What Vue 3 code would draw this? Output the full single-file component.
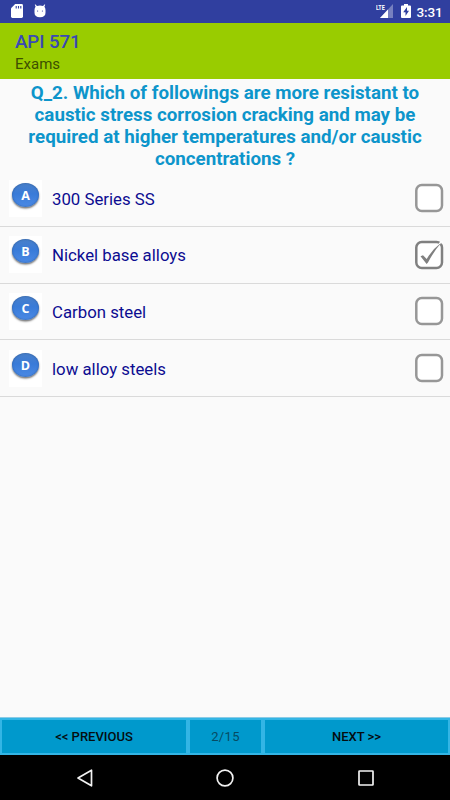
<script setup>
const question = [
  'Q_2. Which of followings are more resistant to',
  'caustic stress corrosion cracking and may be',
  'required at higher temperatures and/or caustic',
  'concentrations ?'
]
const options = [
  { letter: 'A', text: '300 Series SS', checked: false },
  { letter: 'B', text: 'Nickel base alloys', checked: true },
  { letter: 'C', text: 'Carbon steel', checked: false },
  { letter: 'D', text: 'low alloy steels', checked: false }
]
</script>

<template>
  <div class="screen">
    <div class="status">
      <svg class="sd" width="12" height="14" viewBox="0 0 12 14">
        <path fill="#fff" d="M4.2 0H10.6Q12 0 12 1.4V12.6Q12 14 10.6 14H1.4Q0 14 0 12.6V4.2Z" />
        <path stroke="#303f9f" stroke-width="1.1" d="M5.2 2V4.4M7.5 2V4.4M9.8 2V4.4" />
      </svg>
      <svg class="droid" width="12" height="14" viewBox="0 0 12 14">
        <path fill="#fff" d="M1.2 0.2L3 2Q6 1 9 2L10.8 .2L11.2 .7L10.4 2.8Q11.5 4 11.5 6V8.8Q11.5 13.2 6 13.2T.5 8.8V6Q.5 4 1.6 2.8L.8 .7Z" />
        <circle cx="3.6" cy="7" r=".6" fill="#303f9f" />
        <circle cx="8.4" cy="7" r=".6" fill="#303f9f" />
      </svg>
      <span class="grow"></span>
      <span class="lte">LTE</span>
      <svg class="signal" width="13" height="14" viewBox="0 0 13 14">
        <path fill="#7780bf" d="M13 0V14H0Z" />
        <path fill="#fff" d="M8 5.4V14H0Z" />
      </svg>
      <svg class="battery" width="10" height="14" viewBox="0 0 10 14">
        <path fill="#fff" d="M3 0H7V1.4H9Q10 1.4 10 2.4V13Q10 14 9 14H1Q0 14 0 13V2.4Q0 1.4 1 1.4H3Z" />
        <path fill="#303f9f" d="M6 3L2.2 8.3H4.5V12L8 6.8H6Z" />
      </svg>
      <span class="clock">3:31</span>
    </div>
    <header class="header">
      <div class="title">API 571</div>
      <div class="subtitle">Exams</div>
    </header>
    <h1 class="question">
      <span v-for="(line, i) in question" :key="i">{{ line }}</span>
    </h1>
    <ul class="options">
      <li v-for="option in options" :key="option.letter" class="option">
        <span class="tile"><span class="ball">{{ option.letter }}</span></span>
        <span class="label">{{ option.text }}</span>
        <svg class="check" width="30" height="30" viewBox="0 0 30 30">
          <rect x="2.3" y="2" width="25.7" height="26" rx="5.5" fill="#fff" :stroke="option.checked ? '#808080' : '#979797'" stroke-width="2.5" />
          <template v-if="option.checked">
            <path d="M25 4L28.5 1.5" stroke="#fff" stroke-width="1.6" />
            <path d="M6.5 16.2L9 15.2L12.7 19Q18.5 9 27.5 2.5Q20 11 14 22.5L12.6 24Z" fill="#808080" />
          </template>
        </svg>
      </li>
    </ul>
    <div class="grow"></div>
    <div class="pager">
      <button class="btn prev">&lt;&lt; PREVIOUS</button>
      <div class="btn count">2/15</div>
      <button class="btn next">NEXT &gt;&gt;</button>
    </div>
    <nav class="nav">
      <svg width="18" height="20" viewBox="0 0 18 20"><path d="M15.5 2.2V17.8L2 10Z" fill="none" stroke="#f2f2f2" stroke-width="1.7" stroke-linejoin="round" /></svg>
      <svg width="18" height="20" viewBox="0 0 18 20"><circle cx="9" cy="10" r="7.9" fill="none" stroke="#f2f2f2" stroke-width="1.7" /></svg>
      <svg width="18" height="20" viewBox="0 0 18 20"><rect x="2" y="3" width="14" height="14" rx=".5" fill="none" stroke="#f2f2f2" stroke-width="1.7" /></svg>
    </nav>
  </div>
</template>

<style>
body { margin: 0; background: #fafafa; }
</style>

<style scoped>
.screen { width: 450px; height: 800px; display: flex; flex-direction: column; overflow: hidden; background: #fafafa; font-family: Roboto, "Liberation Sans", sans-serif; }
.grow { flex: 1; }
.status { height: 22.5px; box-sizing: border-box; flex: none; display: flex; align-items: flex-start; padding: 4px 8px 0 11px; background: #303f9f; color: #fff; }
.droid { margin-left: 11px; }
.lte { font-size: 8px; line-height: 8px; font-weight: 700; width: 9px; height: 8px; transform: scaleX(.68); transform-origin: 0 0; white-space: nowrap; }
.signal { margin-left: -5px; }
.battery { margin-left: 8px; }
.clock { width: 25.5px; margin-left: 6px; font-size: 13.5px; line-height: 16px; font-weight: 500; letter-spacing: -.1px; white-space: nowrap; }
.header { height: 56px; flex: none; box-sizing: border-box; padding: 7px 15px 0; background: #99cc00; }
.title { font-size: 18.75px; line-height: 24px; font-weight: 500; letter-spacing: -.1px; color: #3949b5; }
.subtitle { font-size: 15px; line-height: 20px; color: #3d5000; }
.question { flex: none; margin: 0; box-sizing: border-box; padding-top: 3.5px; height: 92px; display: flex; flex-direction: column; align-items: center; font-size: 18.75px; line-height: 22px; font-weight: 700; color: #0d95cb; white-space: nowrap; }
.options { list-style: none; margin: 0; padding: 0; flex: none; }
.option { height: 56.6px; box-sizing: border-box; border-bottom: 1px solid #dadada; display: flex; align-items: center; padding: 0 6px 0 9px; }
.tile { width: 33px; height: 37px; box-sizing: border-box; background: #fff; padding: 3px 3px 0; }
.ball { display: block; width: 27px; height: 24px; border-radius: 50%; background: linear-gradient(#4a80c9, #397bd8 45%, #4b8ae5); box-shadow: inset 0 0 2px #255391, 0 1.5px 2px rgba(0, 0, 0, .55); color: #fff; font: 700 12.5px/25px "Open Sans", sans-serif; text-align: center; }
.label { flex: 1; margin-left: 10px; padding-top: 1.2px; font-size: 16.8px; line-height: 22px; color: #0c0c91; white-space: nowrap; }
.pager { height: 38px; flex: none; box-sizing: border-box; display: grid; grid-template-columns: 184px 71px 183px; column-gap: 4px; padding: 2px; border-top: 1px solid #8bcbe5; background: #33b5e5; }
.btn { margin: 0; border: 0; padding: 0; display: flex; align-items: center; justify-content: center; background: #0099cc; color: #050d10; font-family: inherit; font-size: 13px; font-weight: 500; }
.count { color: #064b63; font-weight: 400; letter-spacing: .3px; }
.nav { height: 45px; flex: none; display: flex; justify-content: center; align-items: center; gap: 122.5px; background: #000; }
</style>
